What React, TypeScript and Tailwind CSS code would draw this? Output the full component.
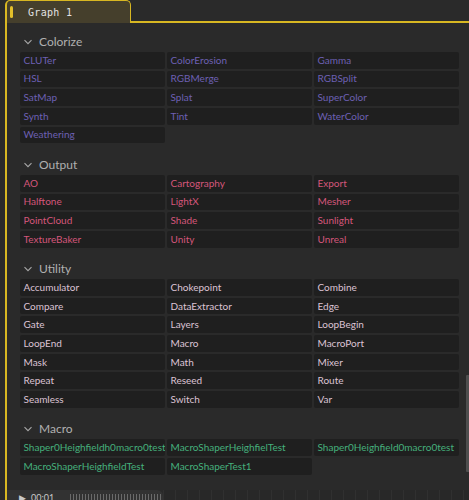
import React from 'react';

type Section = {
  title: string;
  color: string;
  items: string[];
};

const sections: Section[] = [
  {
    title: 'Colorize',
    color: 'text-[#6d60b4]',
    items: ['CLUTer', 'ColorErosion', 'Gamma', 'HSL', 'RGBMerge', 'RGBSplit', 'SatMap', 'Splat', 'SuperColor', 'Synth', 'Tint', 'WaterColor', 'Weathering'],
  },
  {
    title: 'Output',
    color: 'text-[#d4567a]',
    items: ['AO', 'Cartography', 'Export', 'Halftone', 'LightX', 'Mesher', 'PointCloud', 'Shade', 'Sunlight', 'TextureBaker', 'Unity', 'Unreal'],
  },
  {
    title: 'Utility',
    color: 'text-[#dcc3d4]',
    items: [
      'Accumulator', 'Chokepoint', 'Combine',
      'Compare', 'DataExtractor', 'Edge',
      'Gate', 'Layers', 'LoopBegin',
      'LoopEnd', 'Macro', 'MacroPort',
      'Mask', 'Math', 'Mixer',
      'Repeat', 'Reseed', 'Route',
      'Seamless', 'Switch', 'Var',
    ],
  },
  {
    title: 'Macro',
    color: 'text-[#45b07c]',
    items: ['Shaper0Heighfieldh0macro0test', 'MacroShaperHeighfielTest', 'Shaper0Heighfield0macro0test', 'MacroShaperHeighfieldTest', 'MacroShaperTest1'],
  },
];

const Chevron = () => (
  <svg width="10" height="10" viewBox="0 0 10 10" className="shrink-0">
    <path d="M1.5 3.2 L5 6.7 L8.5 3.2" fill="none" stroke="#a8a8a8" strokeWidth="1.1" />
  </svg>
);

const NodeSection: React.FC<{ section: Section; first?: boolean }> = ({ section, first }) => (
  <div className={first ? 'mt-[9px]' : 'mt-[11.6px]'}>
    <div className="h-[20px] flex items-center gap-[6px] pl-[16px]">
      <Chevron />
      <span className="text-[12px] text-[#b0b0b0]">{section.title}</span>
    </div>
    <div className="grid grid-cols-3 gap-[2px] ml-[12.5px] w-[439px]">
      {section.items.map((item) => (
        <div
          key={item}
          className={`h-[16.67px] bg-[#1f1f1f] rounded-[2px] pl-[4px] flex items-center text-[10px] whitespace-nowrap overflow-hidden ${section.color}`}
        >
          {item}
        </div>
      ))}
    </div>
  </div>
);

export default function App() {
  return (
    <div
      className="w-[469px] h-[500px] bg-[#2a2a2a] overflow-hidden flex flex-col"
      style={{ fontFamily: 'Lato, "Noto Sans", sans-serif' }}
    >
      {/* tab strip */}
      <div className="h-[23px] flex items-stretch shrink-0">
        <div className="w-[5px]" />
        <div className="w-[126px] rounded-t-[5px] border-t border-l-2 border-r border-[#d8b722] bg-[#453f2c] flex items-center">
          <div className="ml-[3px] w-[3px] h-[12px] rounded-full bg-[#e4c02a]" />
          <span
            className="ml-[15px] text-[#e2e2e2] tracking-[0.3px]"
            style={{ fontFamily: '"DejaVu Sans Mono", monospace', fontSize: '10px' }}
          >
            Graph 1
          </span>
        </div>
        <div className="flex-1 border-b-2 border-[#d8b722]" />
      </div>

      {/* graph frame */}
      <div className="relative flex-1 ml-[5px] border-l-2 border-[#d8b722] flex flex-col">
        <div className="flex-1">
          {sections.map((s, i) => (
            <NodeSection key={s.title} section={s} first={i === 0} />
          ))}
        </div>

        {/* scrollbar thumb */}
        <div className="absolute right-0 top-[352px] w-[3px] h-[97px] bg-[#4e4e4e] rounded-l-[1px]" />

        {/* timeline dock */}
        <div className="h-[10px] flex shrink-0 overflow-hidden">
          <div className="w-[156px] bg-[#323232] rounded-tr-[6px] flex items-start pt-[3px] text-[9px] text-[#c8c8c8] leading-none">
            <span className="ml-[12px]">▶</span>
            <span className="ml-[5px]">00:01</span>
            <div className="ml-[16px] flex gap-[2px] mt-[1px]">
              {Array.from({ length: 34 }).map((_, i) => (
                <div key={i} className="w-px h-[8px] bg-[#6a6a6a]" />
              ))}
            </div>
            <span className="ml-[6px] text-[#7b6fd0]">::</span>
          </div>
          <div className="flex-1 bg-[#282828] bg-[linear-gradient(90deg,#303030_1px,transparent_1px)] bg-[length:12px_12px]" />
        </div>
      </div>
    </div>
  );
}
